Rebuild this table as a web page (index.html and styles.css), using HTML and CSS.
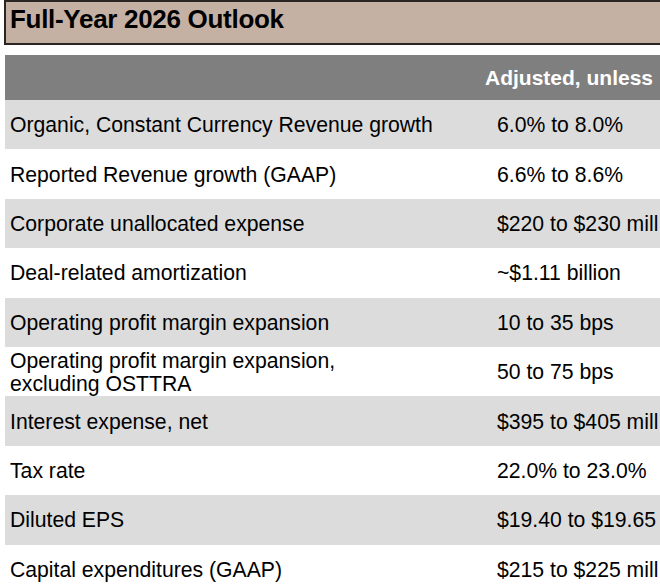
FILE: index.html
```html
<!DOCTYPE html>
<html>
<head>
<meta charset="utf-8">
<link rel="stylesheet" href="styles.css">
</head>
<body>
<div class="page">
  <div class="title-box"><h1 class="title">Full-Year 2026 Outlook</h1></div>
  <div class="table">
    <div class="head"><span class="head-label">Adjusted, unless</span></div>
    <div class="row alt"><div class="label">Organic, Constant Currency Revenue growth</div><div class="value">6.0% to 8.0%</div></div>
    <div class="row"><div class="label">Reported Revenue growth (GAAP)</div><div class="value">6.6% to 8.6%</div></div>
    <div class="row alt"><div class="label">Corporate unallocated expense</div><div class="value">$220 to $230 mill</div></div>
    <div class="row"><div class="label">Deal-related amortization</div><div class="value">~$1.11 billion</div></div>
    <div class="row alt"><div class="label">Operating profit margin expansion</div><div class="value">10 to 35 bps</div></div>
    <div class="row"><div class="label">Operating profit margin expansion,<br>excluding OSTTRA</div><div class="value">50 to 75 bps</div></div>
    <div class="row alt"><div class="label">Interest expense, net</div><div class="value">$395 to $405 mill</div></div>
    <div class="row"><div class="label">Tax rate</div><div class="value">22.0% to 23.0%</div></div>
    <div class="row alt"><div class="label">Diluted EPS</div><div class="value">$19.40 to $19.65</div></div>
    <div class="row"><div class="label">Capital expenditures (GAAP)</div><div class="value">$215 to $225 mill</div></div>
  </div>
</div>
</body>
</html>
```
FILE: styles.css
```css
html, body {
  margin: 0;
  padding: 0;
  background: #ffffff;
  overflow: hidden;
}
.page {
  width: 700px;
  font-family: "Liberation Sans", Arial, sans-serif;
  color: #000;
}
.title-box {
  margin-left: 4px;
  height: 39px;
  border: 2px solid #2a2522;
  background: #c5b1a4;
  display: flex;
  align-items: flex-start;
  padding-left: 4px;
  padding-top: 2px;
  box-sizing: content-box;
}
.title {
  margin: 0;
  font-size: 26px;
  font-weight: bold;
  line-height: 30px;
  letter-spacing: -0.3px;
}
.table {
  margin-top: 10px;
  margin-left: 5px;
}
.head {
  height: 45px;
  background: #7f7f7f;
  display: flex;
  align-items: center;
  padding-left: 480px;
}
.head-label {
  color: #ffffff;
  font-weight: bold;
  font-size: 21px;
  white-space: nowrap;
}
.row {
  height: 49.4px;
  display: grid;
  grid-template-columns: 492px 1fr;
  align-items: center;
  font-size: 21.2px;
  line-height: 23px;
}
.row.alt {
  background: #dcdcdc;
}
.label {
  padding-left: 5px;
  white-space: nowrap;
}
.value {
  white-space: nowrap;
}
```
